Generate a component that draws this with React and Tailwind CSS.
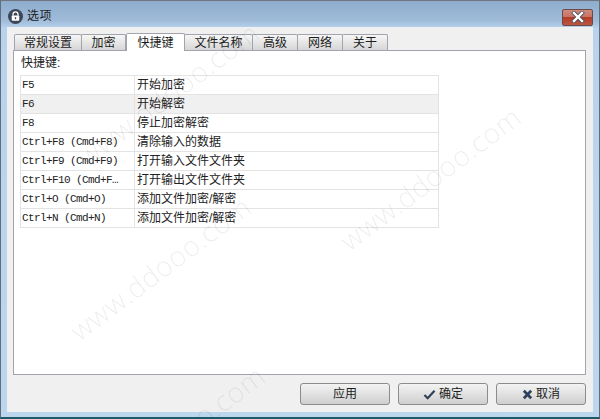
const cjk = "font-['Liberation_Sans','Noto_Sans_CJK_SC',sans-serif]";

const tabs = [
  { label: "常规设置", width: "w-[68px]" },
  { label: "加密", width: "w-[45px]" },
  { label: "快捷键", width: "w-[59px]", active: true },
  { label: "文件名称", width: "w-[69px]" },
  { label: "高级", width: "w-[46px]" },
  { label: "网络", width: "w-[46px]" },
  { label: "关于", width: "w-[46px]" },
];

const rows = [
  ["F5", "开始加密"],
  ["F6", "开始解密", true],
  ["F8", "停止加密解密"],
  ["Ctrl+F8 (Cmd+F8)", "清除输入的数据"],
  ["Ctrl+F9 (Cmd+F9)", "打开输入文件文件夹"],
  ["Ctrl+F10 (Cmd+F…", "打开输出文件文件夹"],
  ["Ctrl+O (Cmd+O)", "添加文件加密/解密"],
  ["Ctrl+N (Cmd+N)", "添加文件加密/解密"],
];

function LockIcon() {
  return (
    <svg viewBox="0 0 18 18" className="ml-[1px] h-[15px] w-[15px] shrink-0">
      <circle cx="9" cy="9" r="9" fill="#3d4656" />
      <path d="M6 8V6.4a3 3 0 0 1 6 0V8" fill="none" stroke="#fff" strokeWidth="1.5" />
      <rect x="4.5" y="7.8" width="9" height="6.4" rx="1" fill="#fff" />
      <rect x="8.2" y="9.8" width="1.6" height="2.4" fill="#3d4656" />
    </svg>
  );
}

function CloseButton() {
  return (
    <button
      type="button"
      className="flex h-[17px] w-[31px] items-center justify-center rounded-[2px] border border-[#6b4a4a] bg-[linear-gradient(#d08a7c_0%,#c77465_45%,#b23c28_50%,#bb5644_100%)]"
      aria-label="Close"
    >
      <svg viewBox="0 0 14 12" className="h-[12px] w-[14px]">
        <path d="M3 2l8 8M11 2l-8 8" stroke="#44505e" strokeWidth="4" strokeLinecap="square" />
        <path d="M3 2l8 8M11 2l-8 8" stroke="#fff" strokeWidth="2.4" strokeLinecap="square" />
      </svg>
    </button>
  );
}

function Tab({ label, width, active, first }) {
  if (active) {
    return (
      <div className={`${width} relative z-10 -mb-px flex h-[18px] items-center justify-center rounded-t-[2px] border border-b-0 border-[#a3a3ad] bg-white text-[12px] text-[#1c1c1c]`}>
        {label}
      </div>
    );
  }
  return (
    <div className={`${width} ${first ? "" : "-ml-px"} flex h-[16px] items-center justify-center rounded-t-[2px] border border-b-0 border-[#a3a3ad] bg-[linear-gradient(#f6f6f6,#d6d6d6)] text-[12px] text-[#1c1c1c]`}>
      {label}
    </div>
  );
}

function Row({ keys, action, shaded }) {
  return (
    <div className={`flex h-[19px] border-b border-[#e3e3e3] ${shaded ? "bg-[#f0f0f0]" : ""}`}>
      <div className="flex w-[114px] items-center border-r border-[#e3e3e3] pl-[1px] font-['Liberation_Mono','Noto_Sans_CJK_SC',monospace] text-[11px] tracking-[-0.6px] whitespace-nowrap text-[#222]">
        {keys}
      </div>
      <div className="flex items-center pl-[2px] text-[12px] text-[#222]">{action}</div>
    </div>
  );
}

function DialogButton({ children, icon }) {
  return (
    <button
      type="button"
      className="flex h-[22px] w-[90px] items-center justify-center gap-[3px] rounded-[3px] border border-[#8c8c8c] bg-[linear-gradient(#f3f3f3,#cfcfcf)] text-[12px] text-[#1c1c1c]"
    >
      {icon}
      {children}
    </button>
  );
}

function Watermark({ className }) {
  return (
    <div className={`pointer-events-none absolute z-20 -rotate-[37deg] font-['Open_Sans',sans-serif] text-[28px] leading-none font-light tracking-[0.5px] whitespace-nowrap text-black/[0.08] ${className}`}>
      www.ddooo.com
    </div>
  );
}

export default function App() {
  return (
    <div className={`${cjk} relative flex h-[419px] w-[600px] flex-col overflow-hidden border-x border-t border-b-2 border-x-[#5f6f7f] border-t-[#70757b] border-b-[#1d5a68] bg-[linear-gradient(#8eaccd_0px,#a0bcd9_20px,#b9d3ec_27px,#bcd6ee_100%)] px-[6px] pb-[5px]`}>
      <div className="flex h-[26px] shrink-0 items-center pt-[4px]">
        <LockIcon />
        <span className="ml-[4px] text-[12px] tracking-[0.5px] text-[#1c1c1c]">选项</span>
        <div className="mt-[2px] ml-auto">
          <CloseButton />
        </div>
      </div>

      <div className="flex min-h-0 flex-1 flex-col bg-[#f0f0f0] px-[6px] pt-[6px]">
        <div className="flex items-end pl-[1px]">
          {tabs.map((t, i) => (
            <Tab key={t.label} first={i === 0} {...t} />
          ))}
        </div>
        <div className="h-[325px] w-[573px] border border-[#a3a3ad] bg-white px-[6px] pt-[3px]">
          <div className="mb-[3px] h-[18px] pl-[1px] text-[12px] leading-[18px] text-[#222]">快捷键:</div>
          <div className="w-[419px] border-x border-t border-[#e3e3e3]">
            {rows.map(([keys, action, shaded]) => (
              <Row key={keys} keys={keys} action={action} shaded={shaded} />
            ))}
          </div>
        </div>
        <div className="mt-[8px] flex justify-end gap-[8px] pr-[1px]">
          <DialogButton>应用</DialogButton>
          <DialogButton
            icon={
              <svg viewBox="0 0 14 12" className="h-[11px] w-[13px]">
                <path d="M1.5 6.5l3.5 3.5 7.5-8" fill="none" stroke="#2f4159" strokeWidth="2.4" />
              </svg>
            }
          >
            确定
          </DialogButton>
          <DialogButton
            icon={
              <svg viewBox="0 0 12 12" className="h-[11px] w-[11px]">
                <path d="M2 2l8 8M10 2l-8 8" fill="none" stroke="#2f4159" strokeWidth="3" />
              </svg>
            }
          >
            取消
          </DialogButton>
        </div>
      </div>

      <Watermark className="top-[79px] left-[58px]" />
      <Watermark className="top-[163px] left-[320px]" />
      <Watermark className="top-[253px] left-[50px]" />
      <Watermark className="top-[422px] left-[64px]" />
    </div>
  );
}
